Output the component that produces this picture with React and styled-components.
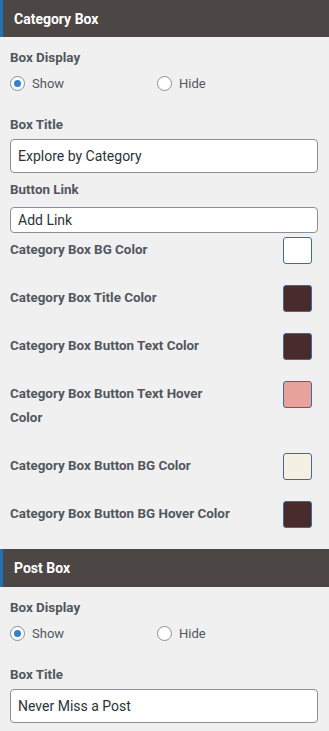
import React from "react";
import styled, { createGlobalStyle } from "styled-components";

const Global = createGlobalStyle`
  html, body { margin: 0; padding: 0; background: #f0f0f0; }
  body { font-family: Roboto, "Noto Sans", Arial, sans-serif; -webkit-font-smoothing: antialiased; }
  * { box-sizing: border-box; }
`;

const Page = styled.div`
  width: 329px;
  background: #f0f0f0;
`;

const Section = styled.section`
  display: flex;
  flex-direction: column;
`;

const Header = styled.div`
  height: ${(p) => p.$h}px;
  display: flex;
  align-items: center;
  background: #4c4745;
  border-left: 3px solid #2271b1;
  padding-left: 11px;
  color: #fff;
  font-weight: 700;
  font-size: 14px;
`;

const Body = styled.div`
  display: flex;
  flex-direction: column;
  padding: 12px 11px 1px 10px;
`;

const Label = styled.div`
  font-size: 13.4px;
  font-weight: 700;
  line-height: 18px;
  color: #50575e;
  margin-bottom: ${(p) => p.$mb || 0}px;
`;

const RadioRow = styled.div`
  display: flex;
  height: 24px;
  align-items: center;
  margin-top: 4px;
  margin-bottom: 21px;
`;

const RadioOption = styled.label`
  display: flex;
  align-items: center;
  gap: 7px;
  width: 147px;
  font-size: 13px;
  color: #50575e;
`;

const RadioCircle = styled.span`
  width: 15px;
  height: 15px;
  border-radius: 50%;
  border: 1px solid ${(p) => (p.$checked ? "#7d8fa3" : "#8c8f94")};
  background: #fff;
  display: flex;
  align-items: center;
  justify-content: center;
  &::after {
    content: "";
    width: 7px;
    height: 7px;
    border-radius: 50%;
    background: ${(p) => (p.$checked ? "#3582c4" : "transparent")};
  }
`;

const Input = styled.div`
  height: ${(p) => p.$h}px;
  border: 1px solid #8c8f94;
  border-radius: 4px;
  background: #fff;
  display: flex;
  align-items: center;
  padding-left: 7px;
  font-size: 14px;
  color: #2c3338;
  margin-bottom: ${(p) => p.$mb || 0}px;
`;

const ColorRow = styled.div`
  display: flex;
  justify-content: space-between;
  align-items: flex-start;
  padding-right: 6px;
  margin-bottom: 22px;
`;

const ColorLabel = styled.div`
  width: 224px;
  padding-top: 2px;
  font-size: 13.4px;
  font-weight: 700;
  line-height: 24px;
  color: #50575e;
`;

const Swatch = styled.div`
  width: 29px;
  height: 27px;
  margin-top: 1px;
  margin-bottom: -4px;
  border: 1px solid #3d6c99;
  border-radius: 3px;
  background: ${(p) => p.$c};
`;

const colors = [
  ["Category Box BG Color", "#ffffff"],
  ["Category Box Title Color", "#4a2b2c"],
  ["Category Box Button Text Color", "#4a2b2c"],
  ["Category Box Button Text Hover Color", "#e6a29b"],
  ["Category Box Button BG Color", "#f5f0e1"],
  ["Category Box Button BG Hover Color", "#4a2b2c"],
];

function Radios() {
  return (
    <RadioRow>
      <RadioOption>
        <RadioCircle $checked />
        Show
      </RadioOption>
      <RadioOption>
        <RadioCircle />
        Hide
      </RadioOption>
    </RadioRow>
  );
}

export default function App() {
  return (
    <Page>
      <Global />
      <Section>
        <Header $h={37}>Category Box</Header>
        <Body>
          <Label>Box Display</Label>
          <Radios />
          <Label $mb={5}>Box Title</Label>
          <Input $h={34} $mb={8}>Explore by Category</Input>
          <Label $mb={8}>Button Link</Label>
          <Input $h={26} $mb={3}>Add Link</Input>
          {colors.map(([l, c]) => (
            <ColorRow key={l}>
              <ColorLabel>{l}</ColorLabel>
              <Swatch $c={c} />
            </ColorRow>
          ))}
        </Body>
      </Section>
      <Section>
        <Header $h={38}>Post Box</Header>
        <Body>
          <Label>Box Display</Label>
          <Radios />
          <Label $mb={5}>Box Title</Label>
          <Input $h={34} $mb={8}>Never Miss a Post</Input>
        </Body>
      </Section>
    </Page>
  );
}
